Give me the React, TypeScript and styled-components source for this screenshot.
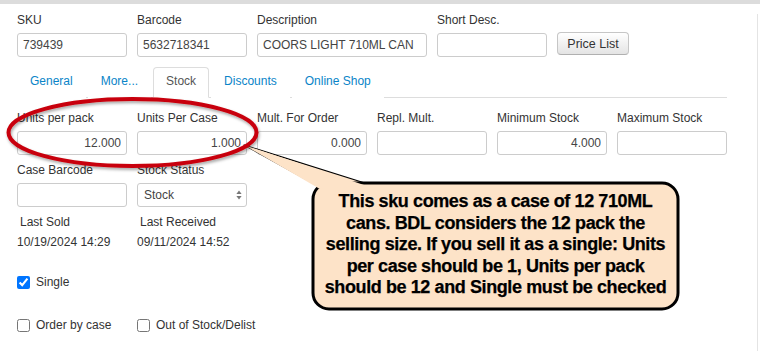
import React from "react";
import styled, { createGlobalStyle } from "styled-components";

const GlobalStyle = createGlobalStyle`
  html, body {
    margin: 0;
    padding: 0;
    background: #fff;
  }
  body {
    font-family: "Liberation Sans", Arial, sans-serif;
  }
  * {
    box-sizing: border-box;
  }
`;

const App = function App(): JSX.Element {
  return (
    <>
      <GlobalStyle />
      <Page>
        <TopBar />
        <Main>
          <Content>
            <Row>
              <Field $w={110}>
                <Label>SKU</Label>
                <TextBox defaultValue="739439" readOnly />
              </Field>
              <Field $w={110}>
                <Label>Barcode</Label>
                <TextBox defaultValue="5632718341" readOnly />
              </Field>
              <Field $w={170}>
                <Label>Description</Label>
                <TextBox defaultValue="COORS LIGHT 710ML CAN" readOnly />
              </Field>
              <Field $w={110}>
                <Label>Short Desc.</Label>
                <TextBox defaultValue="" readOnly />
              </Field>
              <Field $w={72}>
                <PriceButton>Price List</PriceButton>
              </Field>
            </Row>

            <TabBar>
              <Tab>General</Tab>
              <Tab>More...</Tab>
              <Tab $active>Stock</Tab>
              <Tab>Discounts</Tab>
              <Tab>Online Shop</Tab>
            </TabBar>

            <StockPane>
              <Row>
                <Field $w={110}>
                  <Label>Units per pack</Label>
                  <TextBox $right defaultValue="12.000" readOnly />
                </Field>
                <Field $w={110}>
                  <Label>Units Per Case</Label>
                  <TextBox $right defaultValue="1.000" readOnly />
                </Field>
                <Field $w={110}>
                  <Label>Mult. For Order</Label>
                  <TextBox $right defaultValue="0.000" readOnly />
                </Field>
                <Field $w={110}>
                  <Label>Repl. Mult.</Label>
                  <TextBox $right defaultValue="" readOnly />
                </Field>
                <Field $w={110}>
                  <Label>Minimum Stock</Label>
                  <TextBox $right defaultValue="4.000" readOnly />
                </Field>
                <Field $w={110}>
                  <Label>Maximum Stock</Label>
                  <TextBox $right defaultValue="" readOnly />
                </Field>
              </Row>

              <Row $mt={8}>
                <Field $w={110}>
                  <Label>Case Barcode</Label>
                  <TextBox defaultValue="" readOnly />
                </Field>
                <Field $w={110}>
                  <Label>Stock Status</Label>
                  <SelectBox>
                    <span>Stock</span>
                    <svg width="6" height="10" viewBox="0 0 6 10">
                      <path d="M3 0.5 L5.6 4 L0.4 4 Z" fill="#777" />
                      <path d="M3 9.5 L5.6 6 L0.4 6 Z" fill="#777" />
                    </svg>
                  </SelectBox>
                </Field>
              </Row>

              <Row $mt={8}>
                <Field $w={110}>
                  <InfoLabel>Last Sold</InfoLabel>
                  <InfoValue>10/19/2024 14:29</InfoValue>
                </Field>
                <Field $w={110}>
                  <InfoLabel>Last Received</InfoLabel>
                  <InfoValue>09/11/2024 14:52</InfoValue>
                </Field>
              </Row>

              <Row $mt={26}>
                <CheckItem>
                  <CheckBox defaultChecked />
                  Single
                </CheckItem>
              </Row>

              <Row $mt={29}>
                <CheckItem>
                  <CheckBox />
                  Order by case
                </CheckItem>
                <CheckItem>
                  <CheckBox />
                  Out of Stock/Delist
                </CheckItem>
              </Row>
            </StockPane>
          </Content>
          <RightRail />
        </Main>

        {/* annotation drawn over the form */}
        <Overlay width="760" height="351" viewBox="0 0 760 351">
          <defs>
            <filter id="soft" x="-10%" y="-30%" width="120%" height="160%">
              <feDropShadow dx="1" dy="2" stdDeviation="1.5" floodColor="#000" floodOpacity="0.35" />
            </filter>
          </defs>
          <path
            d="M244 145 L318 186 L368 184 Z"
            fill="#fde3c8"
            stroke="#000"
            strokeWidth="1.2"
            strokeLinejoin="round"
          />
          <rect x="313" y="183" width="365" height="126" rx="16" ry="16" fill="#fde3c8" stroke="#000" strokeWidth="3" />
          <path d="M244 145 L319 188.5 L367 186 Z" fill="#fde3c8" />
          <ellipse
            cx="132.5"
            cy="132.5"
            rx="124"
            ry="33.5"
            fill="none"
            stroke="#c8000c"
            strokeWidth="4"
            filter="url(#soft)"
          />
        </Overlay>
        <CalloutText>
          <span>This sku comes as a case of 12 710ML</span>
          <span>cans. BDL considers the 12 pack the</span>
          <span>selling size. If you sell it as a single: Units</span>
          <span>per case should be 1, Units per pack</span>
          <span>should be 12 and Single must be checked</span>
        </CalloutText>
      </Page>
    </>
  );
};

const Page = styled.div`
  position: relative;
  width: 760px;
  height: 351px;
  overflow: hidden;
  background: #fff;
  color: #333;
  font-size: 12px;
`;

const TopBar = styled.div`
  height: 4px;
  background: #dcdcdc;
`;

const Main = styled.div`
  display: flex;
`;

const Content = styled.div`
  width: 757px;
  flex: none;
  padding: 9px 0 0 17px;
`;

const RightRail = styled.div`
  width: 3px;
  height: 337px;
  margin-top: 10px;
  border-left: 1px solid #e4e4e4;
`;

const Row = styled.div<{ $mt?: number }>`
  display: flex;
  gap: 10px;
  margin-top: ${(p) => p.$mt ?? 0}px;
`;

const Field = styled.div<{ $w: number }>`
  width: ${(p) => p.$w}px;
  display: flex;
  flex-direction: column;
`;

const Label = styled.div`
  font-size: 12px;
  line-height: 14px;
  height: 14px;
  color: #333;
  margin-bottom: 6px;
  white-space: nowrap;
`;

const TextBox = styled.input<{ $right?: boolean }>`
  width: 100%;
  height: 24px;
  margin: 0;
  padding: 0 5px;
  border: 1px solid #ccc;
  border-radius: 3px;
  background: #fff;
  font-family: "Liberation Sans", Arial, sans-serif;
  font-size: 12px;
  color: #444;
  text-align: ${(p) => (p.$right ? "right" : "left")};
  outline: none;
`;

const PriceButton = styled.div`
  margin-top: 19px;
  height: 23px;
  display: flex;
  align-items: center;
  justify-content: center;
  border: 1px solid #c6c6c6;
  border-bottom-color: #b0b0b0;
  border-radius: 4px;
  background: linear-gradient(#ffffff, #e4e4e4);
  font-size: 12.5px;
  color: #333;
  white-space: nowrap;
`;

const TabBar = styled.div`
  width: 710px;
  display: flex;
  margin-top: 10px;
  border-bottom: 1px solid #ddd;
`;

const Tab = styled.div<{ $active?: boolean }>`
  height: 31px;
  margin-bottom: -1px;
  margin-right: 2px;
  padding: 0 12px 2px;
  line-height: 27px;
  border: 1px solid ${(p) => (p.$active ? "#ddd" : "transparent")};
  border-bottom-color: ${(p) => (p.$active ? "#fff" : "transparent")};
  border-radius: 4px 4px 0 0;
  background: #fff;
  color: ${(p) => (p.$active ? "#555" : "#0a84c8")};
  font-size: 12px;
  white-space: nowrap;
`;

const StockPane = styled.div`
  padding-top: 13px;
`;

const SelectBox = styled.div`
  height: 24px;
  display: flex;
  align-items: center;
  justify-content: space-between;
  padding: 0 4px 0 6px;
  border: 1px solid #ccc;
  border-radius: 3px;
  background: #fff;
  font-size: 12px;
  color: #444;
`;

const InfoLabel = styled.div`
  padding-left: 3px;
  font-size: 12px;
  line-height: 14px;
  color: #333;
  white-space: nowrap;
`;

const InfoValue = styled.div`
  margin-top: 6px;
  font-size: 12px;
  line-height: 14px;
  color: #333;
  white-space: nowrap;
`;

const CheckItem = styled.label`
  width: 110px;
  height: 14px;
  display: flex;
  align-items: center;
  gap: 6px;
  font-size: 12px;
  line-height: 14px;
  color: #333;
  white-space: nowrap;
`;

const CheckBox = styled.input.attrs({ type: "checkbox" })`
  width: 13px;
  height: 13px;
  margin: 0;
  flex: none;
`;

const Overlay = styled.svg`
  position: absolute;
  left: 0;
  top: 0;
  pointer-events: none;
`;

const CalloutText = styled.div`
  position: absolute;
  left: 313px;
  top: 183px;
  width: 365px;
  height: 126px;
  display: flex;
  flex-direction: column;
  align-items: center;
  justify-content: center;
  padding-bottom: 2px;
  font-family: "Liberation Sans", Arial, sans-serif;
  font-weight: bold;
  font-size: 18px;
  line-height: 21.5px;
  letter-spacing: -0.4px;
  -webkit-text-stroke: 0.25px #000;
  color: #000;
  text-align: center;

  span {
    white-space: nowrap;
  }
`;

export default App;
